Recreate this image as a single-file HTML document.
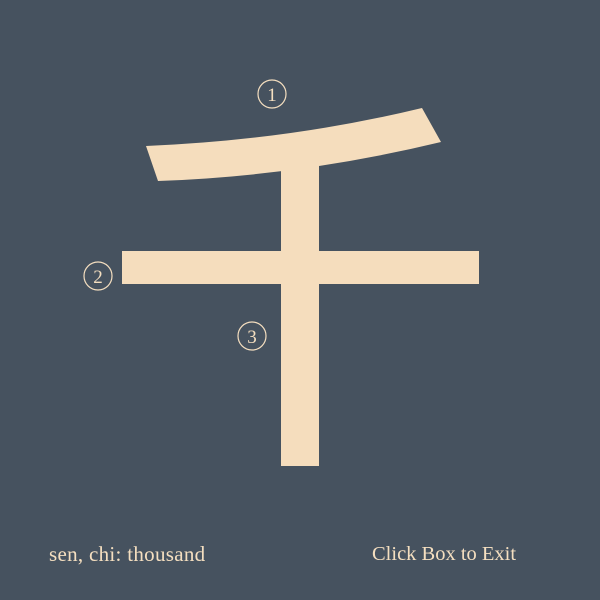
<html><head><style>
body{margin:0;background:#46525f;width:600px;height:600px;overflow:hidden;position:relative;font-family:"Liberation Serif",serif;color:#f5dfc0}
.t{position:absolute;font-size:21px;top:542px;line-height:24px}
</style></head><body>
<svg width="600" height="600" style="position:absolute;left:0;top:0">
<g fill="#f5ddbd">
<path d="M146,146 Q290,140 422,108 L441,142 Q300,176 158,181 Z"/>
<rect x="281" y="166" width="38" height="300"/>
<rect x="122" y="251" width="357" height="33"/>
</g>
<g fill="none" stroke="#f5dfc0" stroke-width="1.2">
<circle cx="272" cy="94" r="14"/><circle cx="98" cy="276" r="14"/><circle cx="252" cy="336" r="14"/>
</g>
<g fill="#f5dfc0" font-family="Liberation Serif,serif" font-size="19" text-anchor="middle">
<text x="272" y="101">1</text><text x="98" y="283">2</text><text x="252" y="343">3</text>
</g>
</svg>
<div class="t" style="left:49px;letter-spacing:0.3px">sen, chi: thousand</div>
<div class="t" style="left:372px;font-size:20.5px">Click Box to Exit</div>
</body></html>
